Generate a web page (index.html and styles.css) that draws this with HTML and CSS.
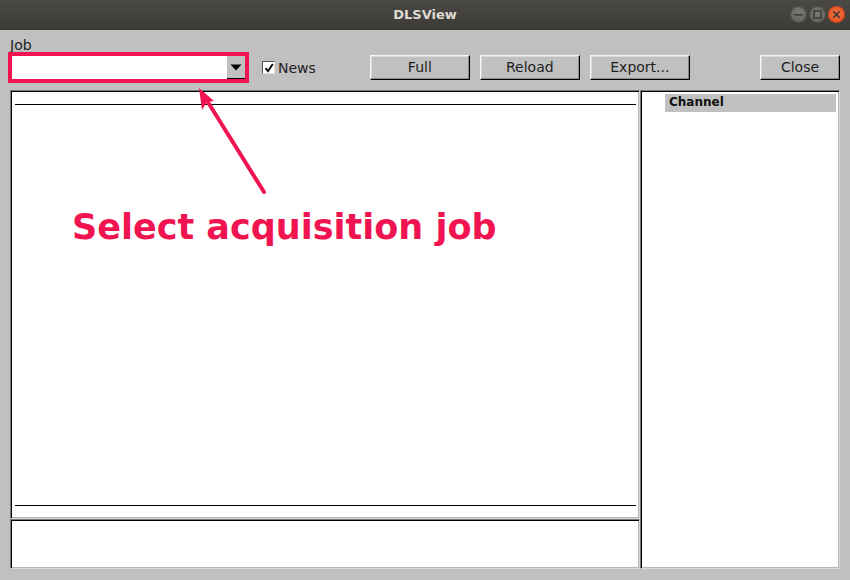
FILE: index.html
```html
<!DOCTYPE html>
<html>
<head>
<meta charset="utf-8">
<title>DLSView</title>
<link rel="stylesheet" href="styles.css">
</head>
<body>
<div class="window">
  <header class="titlebar">
    <span class="title">DLSView</span>
    <div class="wm-buttons">
      <span class="wm wm-min"><svg width="17" height="17" viewBox="0 0 17 17"><rect x="4.5" y="8" width="8" height="1.6" fill="#3a3935"/></svg></span>
      <span class="wm wm-max"><svg width="17" height="17" viewBox="0 0 17 17"><rect x="5" y="5" width="7" height="7" fill="none" stroke="#3a3935" stroke-width="1.5"/></svg></span>
      <span class="wm wm-close"><svg width="17" height="17" viewBox="0 0 17 17"><path d="M5.8 5.8 L11.2 11.2 M11.2 5.8 L5.8 11.2" stroke="#3a3935" stroke-width="1.6" stroke-linecap="round"/></svg></span>
    </div>
  </header>
  <div class="client">
    <div class="toolbar">
      <label class="job-label">Job</label>
      <div class="controls">
        <div class="annot-box">
          <div class="combo">
            <div class="combo-field"></div>
            <div class="combo-drop"><svg width="12" height="7" viewBox="0 0 12 7"><path d="M0.5 0.5 H11.5 L6 6.5 Z" fill="#000"/></svg></div>
          </div>
        </div>
        <label class="check">
          <span class="check-box"><svg width="10" height="10" viewBox="0 0 10 10"><path d="M1.5 5.2 L4 8.2 L8.8 1" fill="none" stroke="#000" stroke-width="1.9"/></svg></span>
          <span class="check-text">News</span>
        </label>
        <button class="btn btn-first">Full</button>
        <button class="btn">Reload</button>
        <button class="btn">Export...</button>
        <button class="btn btn-close">Close</button>
      </div>
    </div>
    <div class="main">
      <div class="left-col">
        <div class="panel graph">
          <div class="rule"></div>
          <div class="rule"></div>
        </div>
        <div class="panel status"></div>
      </div>
      <div class="panel channels">
        <div class="ch-head">Channel</div>
      </div>
    </div>
  </div>
  <svg class="annot-arrow" width="850" height="580" viewBox="0 0 850 580">
    <line x1="264" y1="192" x2="206" y2="99" stroke="#f01450" stroke-width="4" stroke-linecap="round"/>
    <polygon points="199,88 214,101 207,102 202,110" fill="#f01450"/>
  </svg>
  <div class="annot-text">Select acquisition job</div>
</div>
</body>
</html>
```
FILE: styles.css
```css
html, body {
  margin: 0;
  padding: 0;
  background: #c0c0c0;
}

.window {
  position: relative;
  width: 850px;
  height: 580px;
  overflow: hidden;
  background: #c0c0c0;
  font-family: "DejaVu Sans", sans-serif;
  color: #1e1e1e;
}

.titlebar {
  position: relative;
  height: 30px;
  background: linear-gradient(#4a4945, #3c3b37);
  display: flex;
  align-items: center;
  justify-content: center;
}

.title {
  font-family: "DejaVu Sans", sans-serif;
  font-weight: bold;
  font-size: 13px;
  color: #dfdbd2;
  line-height: 30px;
}

.wm-buttons {
  position: absolute;
  right: 5px;
  top: 6px;
  display: flex;
  gap: 2px;
}

.wm {
  width: 17px;
  height: 17px;
  border-radius: 50%;
  display: flex;
  background: radial-gradient(circle at 50% 40%, #7a7974, #5c5b57);
  box-shadow: inset 0 0 0 1px #4a4945;
}

.wm-close {
  background: radial-gradient(circle at 50% 40%, #f26a3c, #e0521f);
  box-shadow: inset 0 0 0 1px #b9431a;
}

.toolbar {
  height: 60px;
  box-sizing: border-box;
  padding: 9px 10px 0 8px;
  display: grid;
  grid-template-rows: 13px 31px;
}

.job-label {
  font-size: 14px;
  line-height: 13px;
  padding-left: 2px;
}

.controls {
  display: flex;
  align-items: center;
}

.annot-box {
  width: 241px;
  height: 31px;
  box-sizing: border-box;
  border: 4px solid #f01450;
  display: flex;
}

.combo {
  flex: 1;
  display: flex;
  background: #fff;
}

.combo-field {
  flex: 1;
  background: #fff;
}

.combo-drop {
  width: 18px;
  background: #c0c0c0;
  border-bottom: 1px solid #000;
  box-sizing: border-box;
  display: flex;
  align-items: center;
  justify-content: center;
}

.check {
  display: flex;
  align-items: center;
  margin-left: 13px;
  font-size: 14px;
}

.check-box {
  width: 13px;
  height: 13px;
  box-sizing: border-box;
  background: #fff;
  border: 1px solid;
  border-color: #555 #e0e0e0 #e0e0e0 #555;
  display: flex;
  align-items: center;
  justify-content: center;
}

.check-text {
  margin-left: 3px;
}

.btn {
  width: 100px;
  height: 25px;
  margin-left: 10px;
  padding: 0 0 1px;
  box-sizing: border-box;
  background: #c0c0c0;
  border: 1px solid;
  border-color: #f4f4f4 #000 #000 #f4f4f4;
  box-shadow: inset -1px -1px 0 #8a8a8a, inset 1px 1px 0 #dadada;
  font-family: "DejaVu Sans", sans-serif;
  font-size: 14px;
  color: #1e1e1e;
}

.btn-first {
  margin-left: 54px;
}

.btn-close {
  width: 80px;
  margin-left: auto;
}

.main {
  display: grid;
  grid-template-columns: 630px 200px;
  margin: 0 10px;
  height: 479px;
}

.left-col {
  display: grid;
  grid-template-rows: 429px 50px;
}

.panel {
  box-sizing: border-box;
  background: #fff;
  border: 1px solid;
  border-color: #7a7a7a #d8d8d8 #d8d8d8 #7a7a7a;
  box-shadow: inset 1px 1px 0 #000, inset -1px -1px 0 #b4b4b4;
}

.graph {
  display: flex;
  flex-direction: column;
  justify-content: space-between;
  padding: 13px 3px 12px 4px;
}

.rule {
  height: 1px;
  background: #000;
}

.channels {
  padding: 3px 3px 0 24px;
}

.ch-head {
  height: 18px;
  background: #c0c0c0;
  font-weight: bold;
  font-size: 12px;
  line-height: 17px;
  padding-left: 4px;
  color: #111;
}

.annot-arrow {
  position: absolute;
  left: 0;
  top: 0;
  pointer-events: none;
}

.annot-text {
  position: absolute;
  left: 72px;
  top: 210px;
  font-family: "DejaVu Sans", sans-serif;
  font-weight: bold;
  font-size: 35px;
  line-height: 35px;
  color: #f01450;
  white-space: nowrap;
}
```
